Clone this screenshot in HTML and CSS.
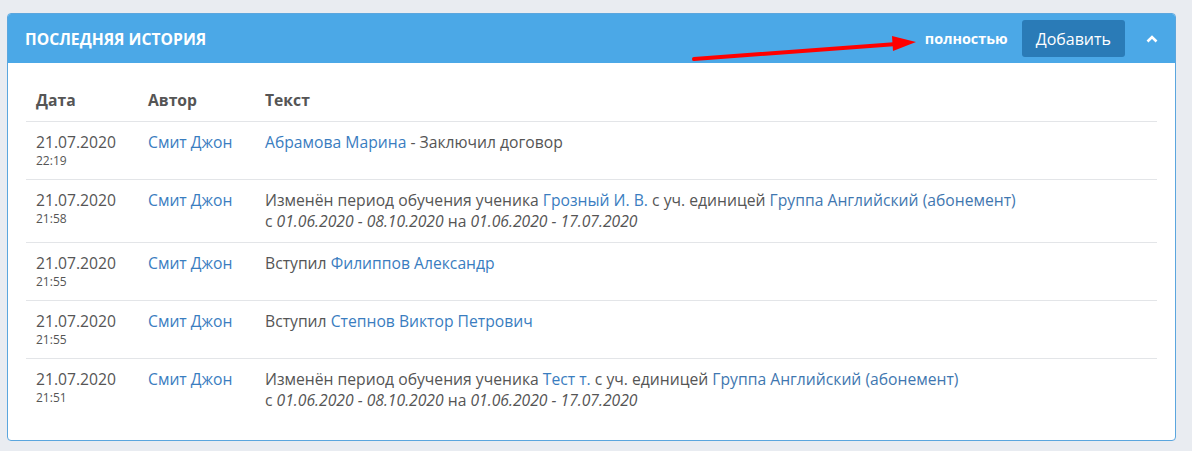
FILE: index.html
```html
<!DOCTYPE html>
<html lang="ru">
<head>
  <meta charset="UTF-8">
  <title>Последняя история</title>
  <link rel="stylesheet" href="styles.css">
</head>
<body>
<!-- History panel -->
<div class="panel">
  <div class="panel-heading">
    <h3 class="panel-title">Последняя история</h3>
    <div class="panel-tools">
      <a href="#" class="full-link">полностью</a>
      <button class="btn-add">Добавить</button>
      <a href="#" class="collapse-btn">
        <svg width="12" height="8" viewBox="0 0 12 8"><path d="M1.5 6.5 L6 2 L10.5 6.5" fill="none" stroke="#fff" stroke-width="2.6"/></svg>
      </a>
    </div>
    <!-- annotation arrow -->
    <svg class="note-arrow" width="240" height="30" viewBox="0 0 240 30">
      <line x1="2" y1="26" x2="205" y2="11" stroke="#f00" stroke-width="4" stroke-linecap="round"/>
      <polygon points="200,3 224,9 201,18" fill="#f00"/>
    </svg>
  </div>

  <div class="panel-body">
    <table class="history">
      <thead>
        <tr>
          <th class="col-date">Дата</th>
          <th class="col-author">Автор</th>
          <th>Текст</th>
        </tr>
      </thead>
      <tbody>
        <tr>
          <td>21.07.2020<div class="time">22:19</div></td>
          <td><a href="#">Смит Джон</a></td>
          <td><a href="#">Абрамова Марина</a> - Заключил договор</td>
        </tr>
        <tr>
          <td>21.07.2020<div class="time">21:58</div></td>
          <td><a href="#">Смит Джон</a></td>
          <td>Изменён период обучения ученика <a href="#">Грозный И. В.</a> с уч. единицей <a href="#" class="group">Группа Английский (абонемент)</a><br>с <i>01.06.2020 - 08.10.2020</i> на <i>01.06.2020 - 17.07.2020</i></td>
        </tr>
        <tr>
          <td>21.07.2020<div class="time">21:55</div></td>
          <td><a href="#">Смит Джон</a></td>
          <td>Вступил <a href="#">Филиппов Александр</a></td>
        </tr>
        <tr>
          <td>21.07.2020<div class="time">21:55</div></td>
          <td><a href="#">Смит Джон</a></td>
          <td>Вступил <a href="#">Степнов Виктор Петрович</a></td>
        </tr>
        <tr>
          <td>21.07.2020<div class="time">21:51</div></td>
          <td><a href="#">Смит Джон</a></td>
          <td>Изменён период обучения ученика <a href="#">Тест т.</a> с уч. единицей <a href="#" class="group">Группа Английский (абонемент)</a><br>с <i>01.06.2020 - 08.10.2020</i> на <i>01.06.2020 - 17.07.2020</i></td>
        </tr>
      </tbody>
    </table>
  </div>
</div>
</body>
</html>
```

FILE: styles.css
```css
/* Basic reset and body styling */
body {
  margin: 0;
  padding: 13px 16px 12px 7px;
  font-family: "Open Sans", "Noto Sans", sans-serif;
  background: #e9ecf1;
  color: #555;
}

/* Panel */
.panel {
  background: #fff;
  border: 1px solid #5ba6de;
  border-radius: 4px;
  overflow: hidden;
}
.panel-heading {
  position: relative;
  display: flex;
  align-items: center;
  justify-content: space-between;
  height: 49px;
  padding: 0 17px 0 17px;
  background: #4ba8e7;
}
.panel-title {
  margin: 0;
  color: #fff;
  font-size: 15.7px;
  font-weight: bold;
  text-transform: uppercase;
}
.panel-tools {
  display: flex;
  align-items: center;
}
.full-link {
  color: #fff;
  font-size: 14.4px;
  font-weight: bold;
  text-decoration: none;
  margin-right: 14px;
}
.btn-add {
  height: 37px;
  padding: 0 14px;
  border: 0;
  border-radius: 3px;
  background: #2a7bb7;
  color: #fff;
  font-family: inherit;
  font-size: 16px;
}
.collapse-btn {
  display: flex;
  margin-left: 21px;
}
.note-arrow {
  position: absolute;
  left: 684px;
  top: 19px;
}

/* Table */
.panel-body {
  padding: 17px 18px 19px;
}
.history {
  width: 100%;
  border-collapse: collapse;
  font-size: 15.7px;
  line-height: 21px;
}
.history th {
  text-align: left;
  font-weight: bold;
  padding: 10px 10px 10px;
  border-bottom: 1px solid #e3e5e8;
}
.history td {
  vertical-align: top;
  padding: 10px 10px 10px;
  border-bottom: 1px solid #e3e5e8;
}
.history tbody tr:last-child td {
  border-bottom: 0;
}
.col-date {
  width: 92px;
}
.col-author {
  width: 97px;
}
.time {
  font-size: 12px;
  line-height: 16px;
}
.history a {
  color: #3a7dbf;
  text-decoration: none;
}
.history a.group {
  color: #3f77b0;
}
.history i {
  font-style: italic;
}
```
